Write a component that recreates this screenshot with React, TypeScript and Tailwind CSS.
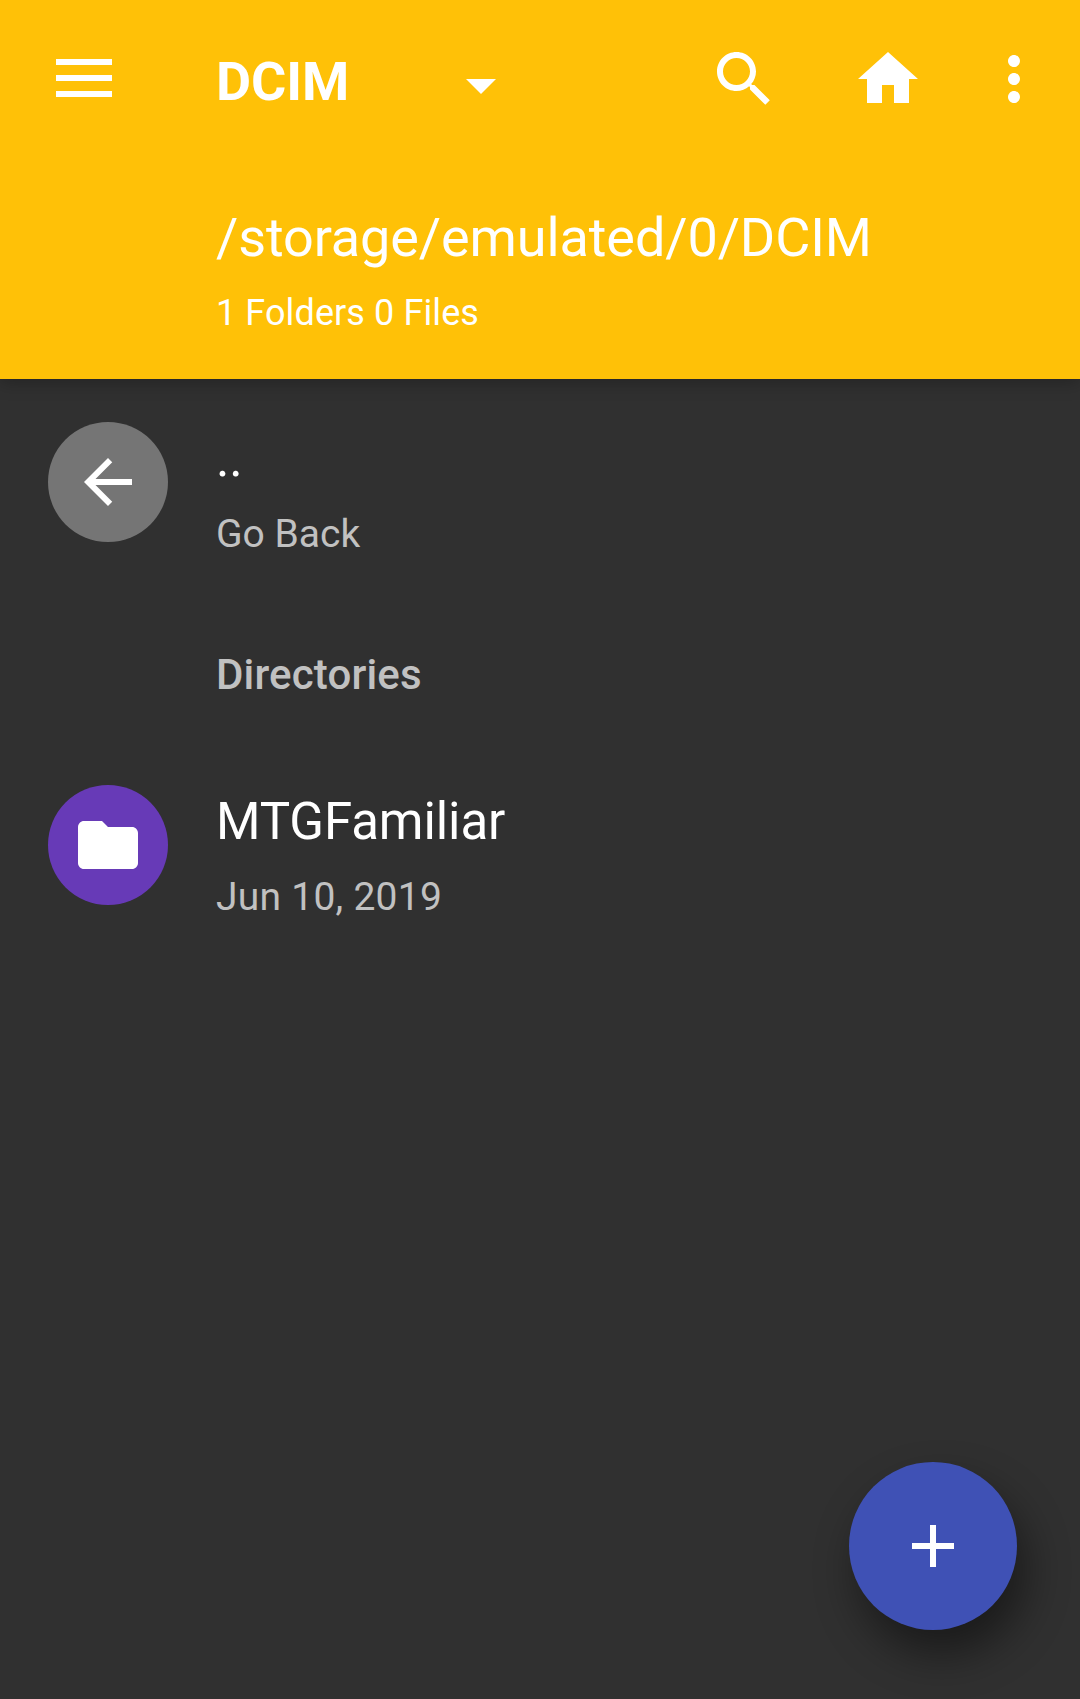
import React from "react";

type IconProps = { path: string; className: string; viewBox?: string };

function Icon({ path, className, viewBox = "0 0 24 24" }: IconProps) {
  return (
    <svg viewBox={viewBox} fill="currentColor" className={className} aria-hidden="true">
      <path d={path} />
    </svg>
  );
}

const paths = {
  menu: "M8 13h56v6H8zM8 29h56v6H8zM8 45h56v6H8z",
  caret: "M7 10l5 5 5-5z",
  search:
    "M15.5 14h-.8l-.3-.3c1-1.1 1.6-2.6 1.6-4.2C16 5.9 13.1 3 9.5 3S3 5.9 3 9.5 5.9 16 9.5 16c1.6 0 3.1-.6 4.2-1.6l.3.3v.8l5.1 5.1 1.5-1.5-5.1-5.1zm-6 0C7 14 5 12 5 9.5S7 5 9.5 5 14 7 14 9.5 12 14 9.5 14z",
  home: "M10 20v-6h4v6h5v-8h3L12 3 2 12h3v8z",
  more: "M12 8c1.1 0 2-.9 2-2s-.9-2-2-2-2 .9-2 2 .9 2 2 2zm0 2c-1.1 0-2 .9-2 2s.9 2 2 2 2-.9 2-2-.9-2-2-2zm0 6c-1.1 0-2 .9-2 2s.9 2 2 2 2-.9 2-2-.9-2-2-2z",
  back: "M20 11H7.83l5.59-5.59L12 4l-8 8 8 8 1.41-1.41L7.83 13H20v-2z",
  folder:
    "M10 4H4c-1.1 0-1.99.9-1.99 2L2 18c0 1.1.9 2 2 2h16c1.1 0 2-.9 2-2V8c0-1.1-.9-2-2-2h-8l-2-2z",
  add: "M19 13h-6v6h-2v-6H5v-2h6V5h2v6h6v2z",
};

type RowProps = {
  icon: string;
  color: string;
  title: string;
  subtitle: string;
  subtitleTracking?: string;
};

function Row({ icon, color, title, subtitle, subtitleTracking = "" }: RowProps) {
  return (
    <li className="flex h-[120px] items-start gap-12 pl-12">
      <span className={`flex size-[120px] shrink-0 items-center justify-center rounded-full ${color}`}>
        <Icon path={icon} className="size-[72px]" />
      </span>
      <div className="pt-[7px]">
        <p className="text-[51px] leading-[60px] tracking-[-0.1px]">{title}</p>
        <p className={`mt-[22px] text-[39px] leading-[46px] text-[#c1c1c1] ${subtitleTracking}`}>{subtitle}</p>
      </div>
    </li>
  );
}

export default function App() {
  return (
    <div className="relative flex h-[1699px] w-[1080px] flex-col overflow-hidden bg-[#303030] font-['Roboto',sans-serif] text-white">
      <header className="z-10 h-[379px] shrink-0 bg-[#ffc107] shadow-[0_4px_16px_rgba(0,0,0,0.25)]">
        <div className="flex items-start pt-[43px]">
          <button className="ml-12 size-[72px]" aria-label="Menu">
            <Icon path={paths.menu} viewBox="0 -3 72 72" className="size-full" />
          </button>
          <button className="ml-24 flex w-[301px] items-start">
            <span className="mt-[7px] w-[229px] text-left text-[54px] leading-[64px] font-bold tracking-[-0.1px]">
              DCIM
            </span>
            <Icon path={paths.caret} className="mt-[6px] size-[72px]" />
          </button>
          <div className="ml-auto flex pr-[30px]">
            <button className="mr-[72px] size-[72px]" aria-label="Search">
              <Icon path={paths.search} className="size-full" />
            </button>
            <button className="mr-[54px] size-[72px]" aria-label="Home">
              <Icon path={paths.home} className="size-full" />
            </button>
            <button className="size-[72px]" aria-label="More options">
              <Icon path={paths.more} className="size-full" />
            </button>
          </div>
        </div>
        <div className="pt-[85px] pl-[216px]">
          <p className="text-[54px] leading-[64px] tracking-[-0.1px]">/storage/emulated/0/DCIM</p>
          <p className="mt-[21px] text-[36px] leading-[44px] tracking-[0.1px]">1 Folders 0 Files</p>
        </div>
      </header>
      <main className="flex-1 pt-[43px]">
        <ul>
          <Row icon={paths.back} color="bg-[#757575]" title=".." subtitle="Go Back" />
        </ul>
        <h2 className="mt-[108px] mb-[85px] pl-[216px] text-[42px] leading-[50px] font-medium tracking-[0.15px] text-[#c1c1c1]">
          Directories
        </h2>
        <ul>
          <Row
            icon={paths.folder}
            color="bg-[#673ab7]"
            title="MTGFamiliar"
            subtitle="Jun 10, 2019"
            subtitleTracking="tracking-[0.25px]"
          />
        </ul>
      </main>
      <button
        aria-label="Add"
        className="absolute right-[63px] bottom-[69px] flex size-[168px] items-center justify-center rounded-full bg-[#3f51b5] shadow-[9px_24px_44px_rgba(0,0,0,0.45)]"
      >
        <Icon path={paths.add} className="size-[72px]" />
      </button>
    </div>
  );
}
